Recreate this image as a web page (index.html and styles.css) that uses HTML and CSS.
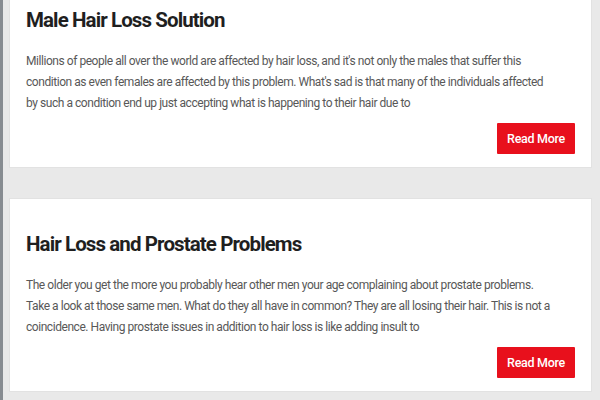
FILE: index.html
```html
<!DOCTYPE html>
<html lang="en">
<head>
<meta charset="utf-8">
<title>Hair Loss Articles</title>
<link rel="stylesheet" href="styles.css">
</head>
<body>
<div class="page">
  <article class="card">
    <h2 class="card-title">Male Hair Loss Solution</h2>
    <p class="card-text">Millions of people all over the world are affected by hair loss, and it's not only the males that suffer this<br>condition as even females are affected by this problem. What's sad is that many of the individuals affected<br>by such a condition end up just accepting what is happening to their hair due to</p>
    <div class="card-actions"><a class="btn" href="#">Read More</a></div>
  </article>
  <article class="card">
    <h2 class="card-title">Hair Loss and Prostate Problems</h2>
    <p class="card-text">The older you get the more you probably hear other men your age complaining about prostate problems.<br>Take a look at those same men. What do they all have in common? They are all losing their hair. This is not a<br>coincidence. Having prostate issues in addition to hair loss is like adding insult to</p>
    <div class="card-actions"><a class="btn" href="#">Read More</a></div>
  </article>
</div>
</body>
</html>
```

FILE: styles.css
```css
html, body {
  margin: 0;
  padding: 0;
  background: #e9e9e9;
}
body {
  font-family: "Roboto", sans-serif;
  overflow: hidden;
}
.page {
  border-left: 3px solid #878c91;
  padding: 0 8px 0 6px;
  margin-top: -26px;
  min-height: 460px;
  display: flex;
  flex-direction: column;
  gap: 30px;
}
.card {
  background: #ffffff;
  border: 1px solid #e2e2e2;
  padding: 31px 16px 13px 16px;
}
.card-title {
  margin: 0;
  font-size: 20.5px;
  line-height: 28px;
  font-weight: 700;
  letter-spacing: -0.9px;
  color: #1f1f1f;
}
.card-text {
  margin: 17px 0 0 0;
  font-size: 12px;
  line-height: 21px;
  letter-spacing: -0.45px;
  word-spacing: 0;
  color: #585858;
  white-space: nowrap;
}
.card-actions {
  display: flex;
  justify-content: flex-end;
  margin-top: 9px;
}
.btn {
  display: flex;
  align-items: center;
  justify-content: center;
  width: 78px;
  height: 31px;
  background: #e8101c;
  color: #ffffff;
  font-size: 12.5px;
  font-weight: 500;
  letter-spacing: -0.3px;
  text-decoration: none;
  border-radius: 1px;
}
```
